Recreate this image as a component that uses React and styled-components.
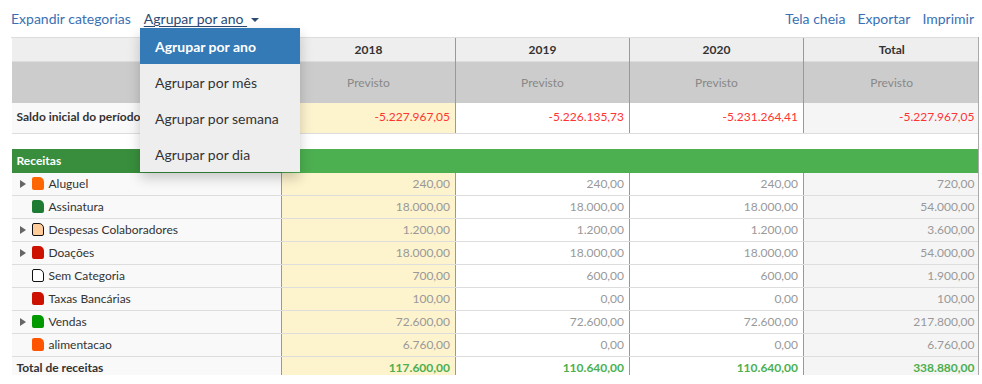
import React from 'react'
import styled, { createGlobalStyle } from 'styled-components'

const GlobalStyle = createGlobalStyle`
    body {
        margin: 0;
        background: #fff;
        font-family: Lato, "Open Sans", sans-serif;
        color: #333;
    }
`

const Page = styled.div`
    position: relative;
    width: 982px;
    height: 384px;
    padding: 0 3px 0 11px;
    box-sizing: border-box;
`
const Toolbar = styled.div`
    height: 37px;
    display: flex;
    align-items: center;
    justify-content: space-between;
    padding-right: 5px;
    font-size: 14px;
`
const LinkGroup = styled.div`
    display: flex;
    align-items: center;
    gap: ${props => props.gap}px;
`
const Link = styled.span`
    color: ${props => props.active ? '#2c4a73' : '#3a70b3'};
    text-decoration: ${props => props.active ? 'underline' : 'none'};
    text-underline-offset: 2px;
    cursor: pointer;
    white-space: nowrap;
`
const Caret = styled.span`
    display: inline-block;
    margin-left: 4px;
    vertical-align: middle;
    border-left: 4px solid transparent;
    border-right: 4px solid transparent;
    border-top: 4px solid #2c4a73;
`
const Menu = styled.ul`
    position: absolute;
    left: 140px;
    top: 28px;
    width: 160px;
    margin: 0;
    padding: 0;
    list-style: none;
    background: #eeeeee;
    box-shadow: 0 6px 12px rgba(0, 0, 0, .2);
    z-index: 10;
`
const MenuItem = styled.li`
    height: 36px;
    display: flex;
    align-items: center;
    padding-left: 15px;
    font-size: 14px;
    font-weight: ${props => props.active ? 700 : 400};
    color: ${props => props.active ? '#fff' : '#333'};
    background: ${props => props.active ? '#337ab7' : 'transparent'};
`
const Scroller = styled.div`
    height: 338px;
    overflow: hidden;
    border-right: 1px solid #aaa;
`
const Table = styled.table`
    width: 968px;
    table-layout: fixed;
    border-collapse: collapse;
    font-size: 12px;
`
const HeadCell = styled.th`
    height: ${props => props.sub ? 41 : 23}px;
    background: ${props => props.sub ? '#cccccc' : '#eeeeee'};
    color: ${props => props.sub ? '#888' : '#333'};
    font-weight: ${props => props.sub ? 400 : 700};
    text-align: center;
    padding: 0;
    border-top: 1px solid #ddd;
    border-left: 1px solid ${props => props.first ? 'transparent' : '#999'};
`
const LabelCell = styled.td`
    height: ${props => props.h || 22}px;
    padding: 0 0 ${props => props.lift ? 3 : 0}px 5px;
    background: #f9f9f9;
    color: #333;
    font-weight: ${props => props.bold ? 700 : 400};
    border-bottom: 1px solid #ddd;
    white-space: nowrap;
    overflow: hidden;
`
const ValueCell = styled.td`
    padding: 0 5px ${props => props.lift ? 3 : 0}px 0;
    text-align: right;
    background: ${props => props.tone === 'current' ? '#fdf3cd' : props.tone === 'total' ? '#f5f5f5' : '#fff'};
    color: ${props => props.color || '#999'};
    font-weight: ${props => props.bold ? 700 : 400};
    border-left: 1px solid #999;
    border-bottom: 1px solid #ddd;
`
const SpacerRow = styled.tr`
    height: 15px;
    td { padding: 0; background: #fff; }
`
const GroupCell = styled.td`
    height: 24px;
    padding: 0 5px;
    background: ${props => props.dark ? '#388e3c' : '#4caf50'};
    color: #fff;
    font-weight: 700;
`
const Label = styled.div`
    display: flex;
    align-items: center;
`
const Expander = styled.span`
    width: 6px;
    margin: 0 6px 0 3px;
    &::before {
        content: '';
        display: ${props => props.show ? 'block' : 'none'};
        border-top: 4px solid transparent;
        border-bottom: 4px solid transparent;
        border-left: 6px solid #666;
    }
`
const Swatch = styled.span`
    width: ${props => props.outlined ? 10 : 12}px;
    height: ${props => props.outlined ? 11 : 13}px;
    margin-right: 5px;
    background: ${props => props.color};
    border: ${props => props.outlined ? '1px solid #111' : 'none'};
    border-radius: 2px 5px 2px 2px;
`

const categories = [
    { name: 'Aluguel', color: '#ff6600', expand: true, values: ['240,00', '240,00', '240,00', '720,00'] },
    { name: 'Assinatura', color: '#1e7b34', values: ['18.000,00', '18.000,00', '18.000,00', '54.000,00'] },
    { name: 'Despesas Colaboradores', color: '#ffcc99', outlined: true, expand: true, values: ['1.200,00', '1.200,00', '1.200,00', '3.600,00'] },
    { name: 'Doações', color: '#cc1100', expand: true, values: ['18.000,00', '18.000,00', '18.000,00', '54.000,00'] },
    { name: 'Sem Categoria', color: '#fff', outlined: true, values: ['700,00', '600,00', '600,00', '1.900,00'] },
    { name: 'Taxas Bancárias', color: '#cc1100', values: ['100,00', '0,00', '0,00', '100,00'] },
    { name: 'Vendas', color: '#009900', expand: true, values: ['72.600,00', '72.600,00', '72.600,00', '217.800,00'] },
    { name: 'alimentacao', color: '#ff5500', values: ['6.760,00', '0,00', '0,00', '6.760,00'] },
]
const tones = ['current', 'plain', 'plain', 'total']
const years = ['2018', '2019', '2020', 'Total']

const ValueCells = ({ values, color, bold, lift }) => values.map((v, i) =>
    <ValueCell key={ i } tone={ tones[i] } color={ color } bold={ bold } lift={ lift }>{ v }</ValueCell>
)

export default function App() {
    return <Page>
        <GlobalStyle />
        <Toolbar>
            <LinkGroup gap={ 13 }>
                <Link>Expandir categorias</Link>
                <Link active>Agrupar por ano <Caret /></Link>
            </LinkGroup>
            <LinkGroup gap={ 12 }>
                <Link>Tela cheia</Link>
                <Link>Exportar</Link>
                <Link>Imprimir</Link>
            </LinkGroup>
        </Toolbar>
        <Menu>
            <MenuItem active>Agrupar por ano</MenuItem>
            <MenuItem>Agrupar por mês</MenuItem>
            <MenuItem>Agrupar por semana</MenuItem>
            <MenuItem>Agrupar por dia</MenuItem>
        </Menu>
        <Scroller>
            <Table>
                <colgroup>
                    <col style={{ width: 270 }} />
                    <col style={{ width: 174 }} />
                    <col style={{ width: 174 }} />
                    <col style={{ width: 174 }} />
                    <col style={{ width: 176 }} />
                </colgroup>
                <thead>
                    <tr>
                        <HeadCell first />
                        { years.map(y => <HeadCell key={ y }>{ y }</HeadCell>) }
                    </tr>
                    <tr>
                        <HeadCell sub first />
                        { years.map(y => <HeadCell sub key={ y }>Previsto</HeadCell>) }
                    </tr>
                </thead>
                <tbody>
                    <tr>
                        <LabelCell h={ 27 } lift bold>Saldo inicial do período</LabelCell>
                        <ValueCells values={['-5.227.967,05', '-5.226.135,73', '-5.231.264,41', '-5.227.967,05']} color="#ff3333" lift />
                    </tr>
                    <SpacerRow><td colSpan={ 5 } /></SpacerRow>
                    <tr>
                        <GroupCell dark>Receitas</GroupCell>
                        <GroupCell colSpan={ 4 } />
                    </tr>
                    { categories.map(c =>
                        <tr key={ c.name }>
                            <LabelCell>
                                <Label>
                                    <Expander show={ c.expand } />
                                    <Swatch color={ c.color } outlined={ c.outlined } />
                                    { c.name }
                                </Label>
                            </LabelCell>
                            <ValueCells values={ c.values } />
                        </tr>
                    ) }
                    <tr>
                        <LabelCell bold>Total de receitas</LabelCell>
                        <ValueCells values={['117.600,00', '110.640,00', '110.640,00', '338.880,00']} color="#4caf50" bold />
                    </tr>
                </tbody>
            </Table>
        </Scroller>
    </Page>
}
